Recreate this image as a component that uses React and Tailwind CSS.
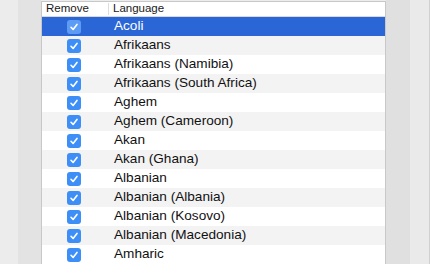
import React from "react";

const languages = [
  "Acoli",
  "Afrikaans",
  "Afrikaans (Namibia)",
  "Afrikaans (South Africa)",
  "Aghem",
  "Aghem (Cameroon)",
  "Akan",
  "Akan (Ghana)",
  "Albanian",
  "Albanian (Albania)",
  "Albanian (Kosovo)",
  "Albanian (Macedonia)",
  "Amharic",
];

// Small blue mac-style checkbox
const CheckBox = ({ selected }) => (
  <div
    className={`w-[14px] h-[14px] rounded-[3px] flex items-center justify-center ${
      selected ? "bg-[#5d9cf5]" : "bg-[#3d8ef6]"
    }`}
  >
    <svg width="10" height="10" viewBox="0 0 10 10">
      <path
        d="M2 5.3 L4.1 7.4 L8 2.4"
        fill="none"
        stroke="white"
        strokeWidth="1.6"
        strokeLinecap="round"
        strokeLinejoin="round"
      />
    </svg>
  </div>
);

const App = () => {
  return (
    <div
      className="flex w-[430px] h-[264px] overflow-hidden bg-[#ececec]"
      style={{ fontFamily: "'Liberation Sans', Arial, sans-serif" }}
    >
      {/* Left panel edge */}
      <div className="w-[18px] shrink-0 bg-[#ececec]" />
      <div className="w-[23px] shrink-0 bg-[#e3e3e3]" />

      {/* Table */}
      <div className="w-[345px] shrink-0 flex flex-col bg-white border-l border-r border-t border-[#c8c8c8] mt-[1px]">
        {/* Header */}
        <div className="flex h-[15px] shrink-0 items-center border-b border-[#d9d9d9] text-[11.5px] text-[#1a1a1a]">
          <div className="w-[67px] pl-[4px] border-r border-[#dcdcdc] h-[12px] flex items-center">
            Remove
          </div>
          <div className="pl-[4px]">Language</div>
        </div>

        {/* Rows */}
        {languages.map((lang, i) => {
          const selected = i === 0;
          const bg = selected ? "bg-[#2a66d6]" : i % 2 === 1 ? "bg-[#f3f3f3]" : "bg-white";
          return (
            <div key={lang} className={`flex h-[19px] shrink-0 items-center ${bg}`}>
              <div className="w-[67px] pl-[25px] flex">
                <CheckBox selected={selected} />
              </div>
              <div
                className={`pl-[5px] text-[13.6px] ${selected ? "text-white" : "text-[#111]"}`}
              >
                {lang}
              </div>
            </div>
          );
        })}
      </div>

      {/* Right panel edge */}
      <div className="w-[24px] shrink-0 bg-[#e0e0e0]" />
      <div className="flex-1 bg-[#eaeaea] border-r border-[#d0d0d0]" />
    </div>
  );
};

export default App;
